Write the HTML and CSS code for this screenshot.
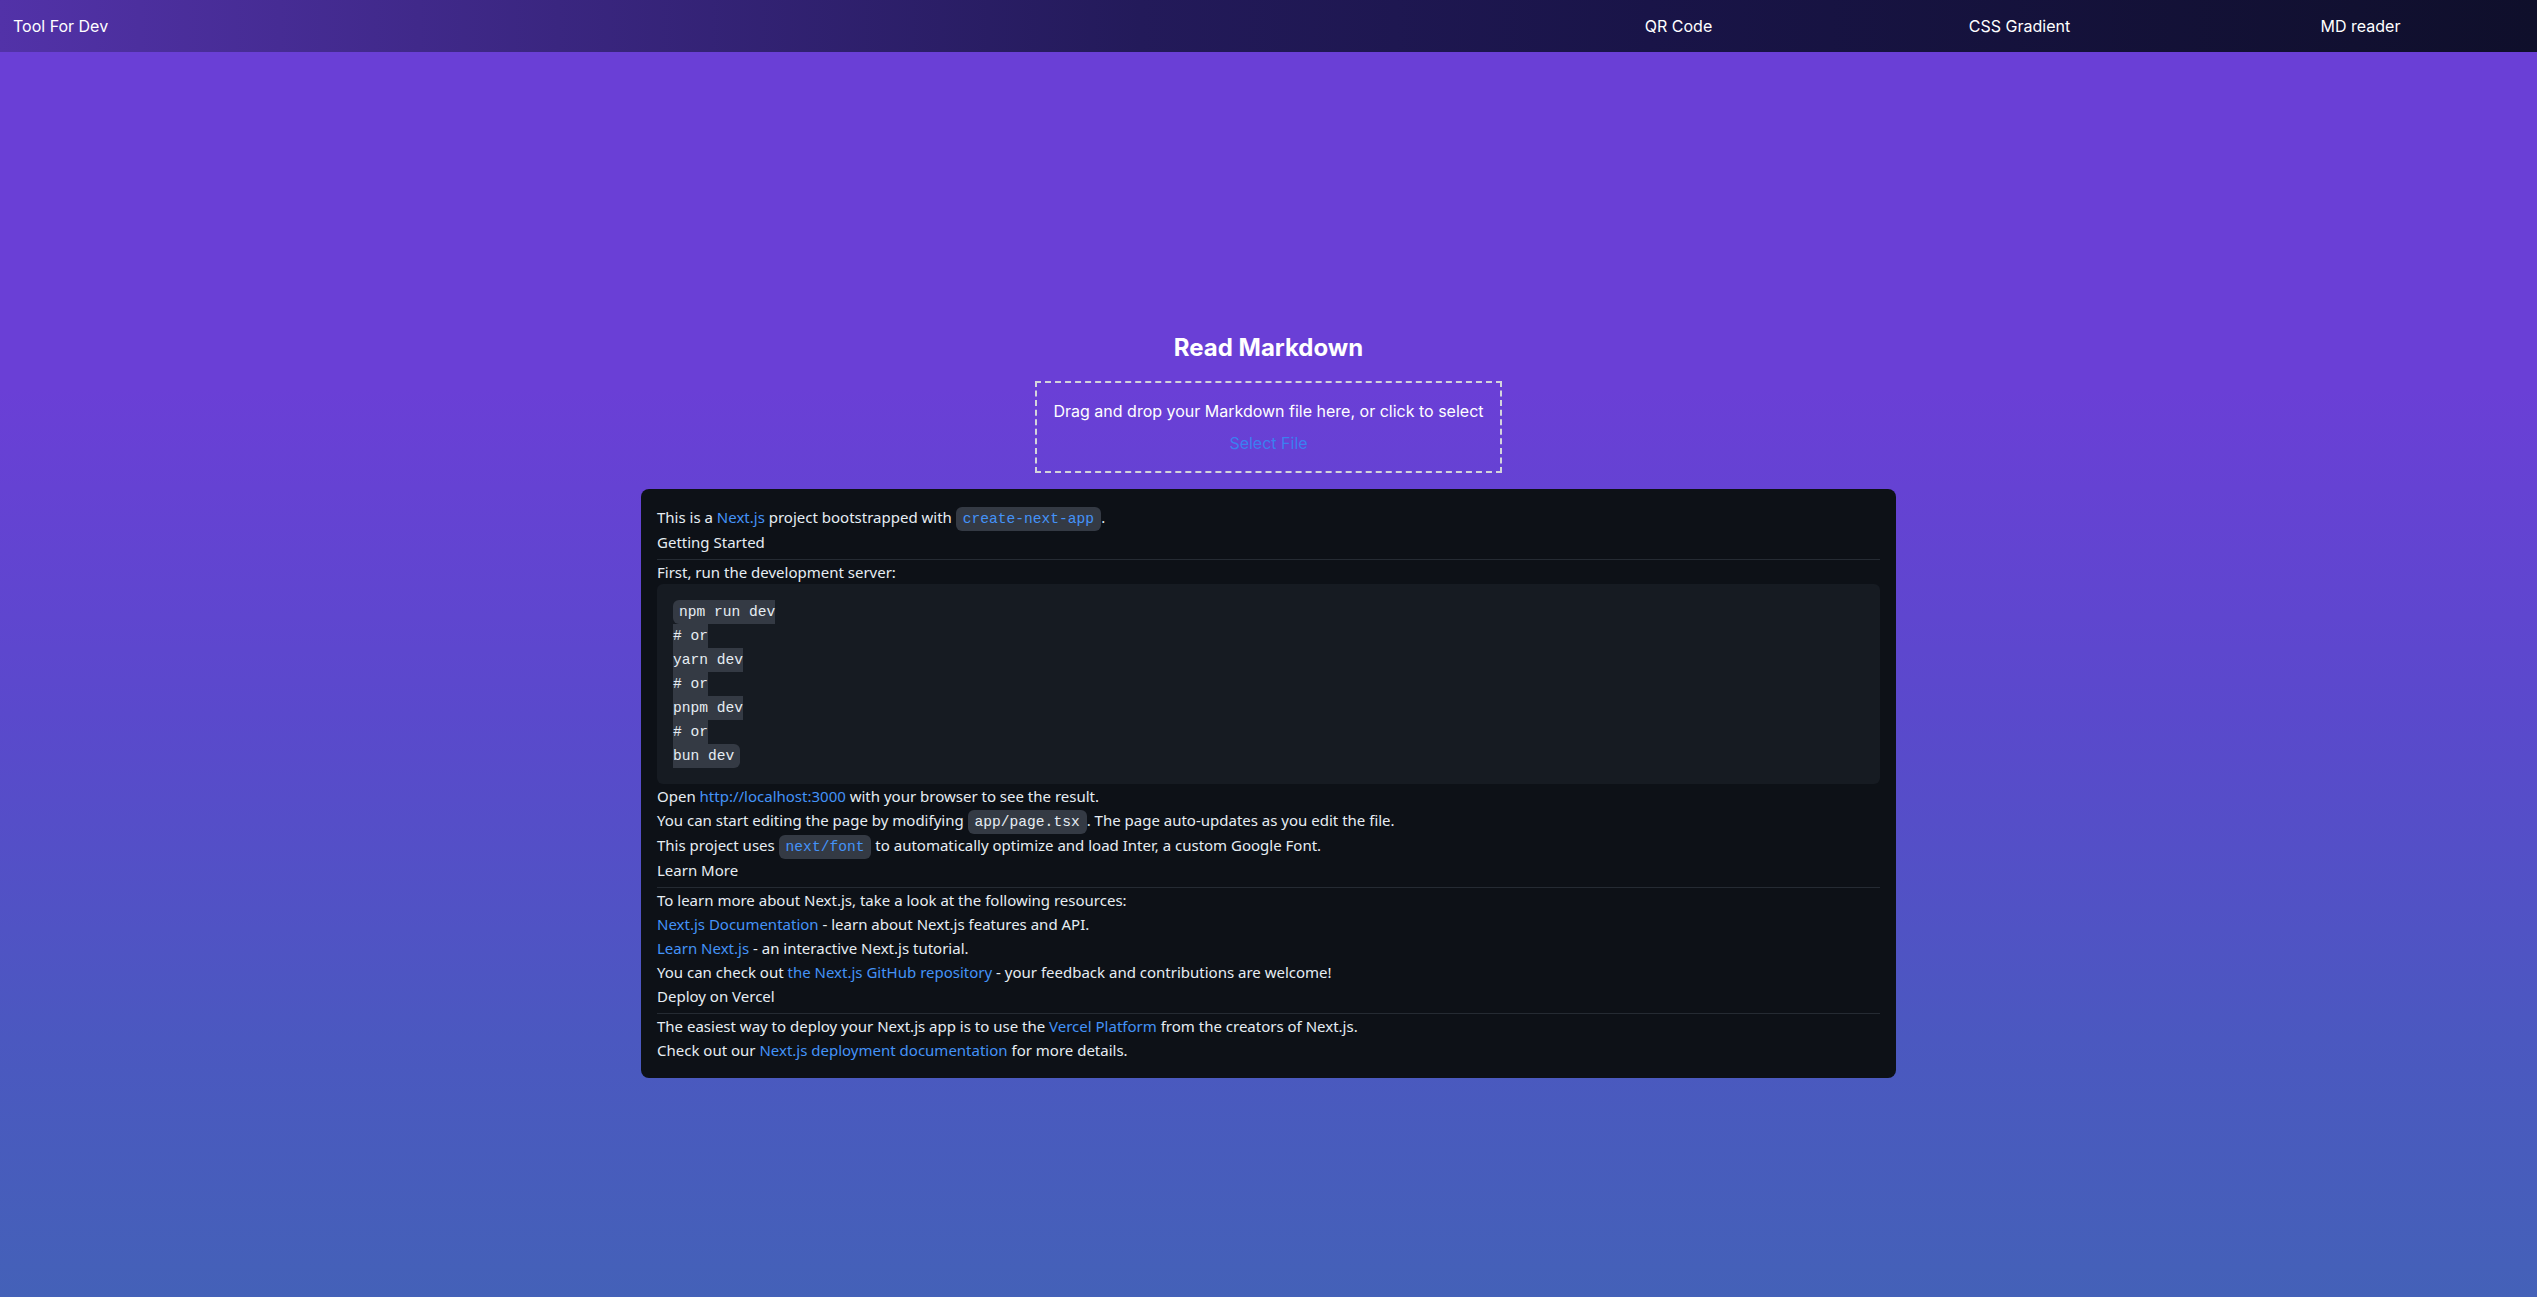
FILE: index.html
```html
<!DOCTYPE html>
<html lang="en">
<head>
<meta charset="utf-8">
<title>Tool For Dev - MD reader</title>
<link rel="stylesheet" href="styles.css">
</head>
<body>
<header class="nav">
  <a class="brand" href="#">Tool For Dev</a>
  <nav class="links">
    <a href="#">QR Code</a>
    <a href="#">CSS Gradient</a>
    <a href="#">MD reader</a>
  </nav>
</header>
<main class="main">
  <h1 class="title">Read Markdown</h1>
  <div class="drop">
    <p class="drop-text">Drag and drop your Markdown file here, or click to select</p>
    <span class="select">Select File</span>
  </div>
  <article class="md">
    <p>This is a <a href="#">Next.js</a> project bootstrapped with <a href="#"><code>create-next-app</code></a>.</p>
    <h2>Getting Started</h2>
    <p>First, run the development server:</p>
    <pre><code>npm run dev
# or
yarn dev
# or
pnpm dev
# or
bun dev</code></pre>
    <p>Open <a href="#">http://localhost:3000</a> with your browser to see the result.</p>
    <p>You can start editing the page by modifying <code>app/page.tsx</code>. The page auto-updates as you edit the file.</p>
    <p>This project uses <a href="#"><code>next/font</code></a> to automatically optimize and load Inter, a custom Google Font.</p>
    <h2>Learn More</h2>
    <p>To learn more about Next.js, take a look at the following resources:</p>
    <ul>
      <li><a href="#">Next.js Documentation</a> - learn about Next.js features and API.</li>
      <li><a href="#">Learn Next.js</a> - an interactive Next.js tutorial.</li>
    </ul>
    <p>You can check out <a href="#">the Next.js GitHub repository</a> - your feedback and contributions are welcome!</p>
    <h2>Deploy on Vercel</h2>
    <p>The easiest way to deploy your Next.js app is to use the <a href="#">Vercel Platform</a> from the creators of Next.js.</p>
    <p>Check out our <a href="#">Next.js deployment documentation</a> for more details.</p>
  </article>
</main>
</body>
</html>
```
FILE: styles.css
```css
* { box-sizing: border-box; }

html, body { margin: 0; padding: 0; }

body {
  min-height: 100vh;
  font-family: Inter, "Noto Sans", sans-serif;
  color: #ffffff;
  background: linear-gradient(to bottom, #6a3fd6 0%, #6a3fd6 30%, #5a49cc 55%, #4b58c0 80%, #4461b8 100%);
}

a { text-decoration: none; color: inherit; }

.nav {
  display: flex;
  justify-content: space-between;
  align-items: center;
  height: 52px;
  padding: 0 6px 0 13px;
  background: linear-gradient(to right, #5232a8 0%, #3a2680 22%, #231a5a 45%, #191448 65%, #0f0f2b 100%);
}

.brand {
  font-size: 16px;
  line-height: 24px;
  color: #ffffff;
}

.links {
  display: grid;
  grid-template-columns: repeat(3, 341px);
}

.links a {
  text-align: center;
  font-size: 16px;
  line-height: 24px;
  color: #ffffff;
}

.main {
  display: flex;
  flex-direction: column;
  align-items: center;
  padding: 280px 0 120px;
}

.title {
  margin: 0 0 17px;
  font-size: 24px;
  line-height: 32px;
  font-weight: 700;
  color: #ffffff;
}

.drop {
  display: flex;
  flex-direction: column;
  align-items: center;
  padding: 16px;
  border: 2px dashed #d4d4dc;
  cursor: pointer;
}

.drop-text {
  margin: 0;
  font-size: 16px;
  line-height: 24px;
  color: #ffffff;
}

.select {
  margin-top: 8px;
  font-size: 16px;
  line-height: 24px;
  color: #3b7ff0;
}

.md {
  width: 1255px;
  margin-top: 16px;
  padding: 16px;
  border-radius: 8px;
  background: #0d1117;
  color: #e6edf3;
  font-family: "Noto Sans", "Open Sans", sans-serif;
  font-size: 15px;
  line-height: 24px;
}

.md p { margin: 0; }

.md a { color: #4493f8; }

.md h2 {
  margin: 0;
  padding-bottom: 5px;
  border-bottom: 1px solid #252b33;
  font-size: 15px;
  font-weight: 400;
  line-height: 24px;
}

.md ul {
  margin: 0;
  padding: 0;
  list-style: none;
}

.md code {
  font-family: "Liberation Mono", "DejaVu Sans Mono", monospace;
  font-size: 14.6px;
  line-height: 21px;
  padding: 4px 7px;
  border-radius: 6px;
  background: #343a44;
}

.md pre {
  margin: 0;
  padding: 16px;
  border-radius: 6px;
  background: #161b22;
  font-family: "Liberation Mono", "DejaVu Sans Mono", monospace;
  font-size: 14.6px;
  line-height: 24px;
  white-space: pre;
}

.md pre code {
  line-height: 24px;
  padding: 4px 6px;
  color: #e6edf3;
}
```
